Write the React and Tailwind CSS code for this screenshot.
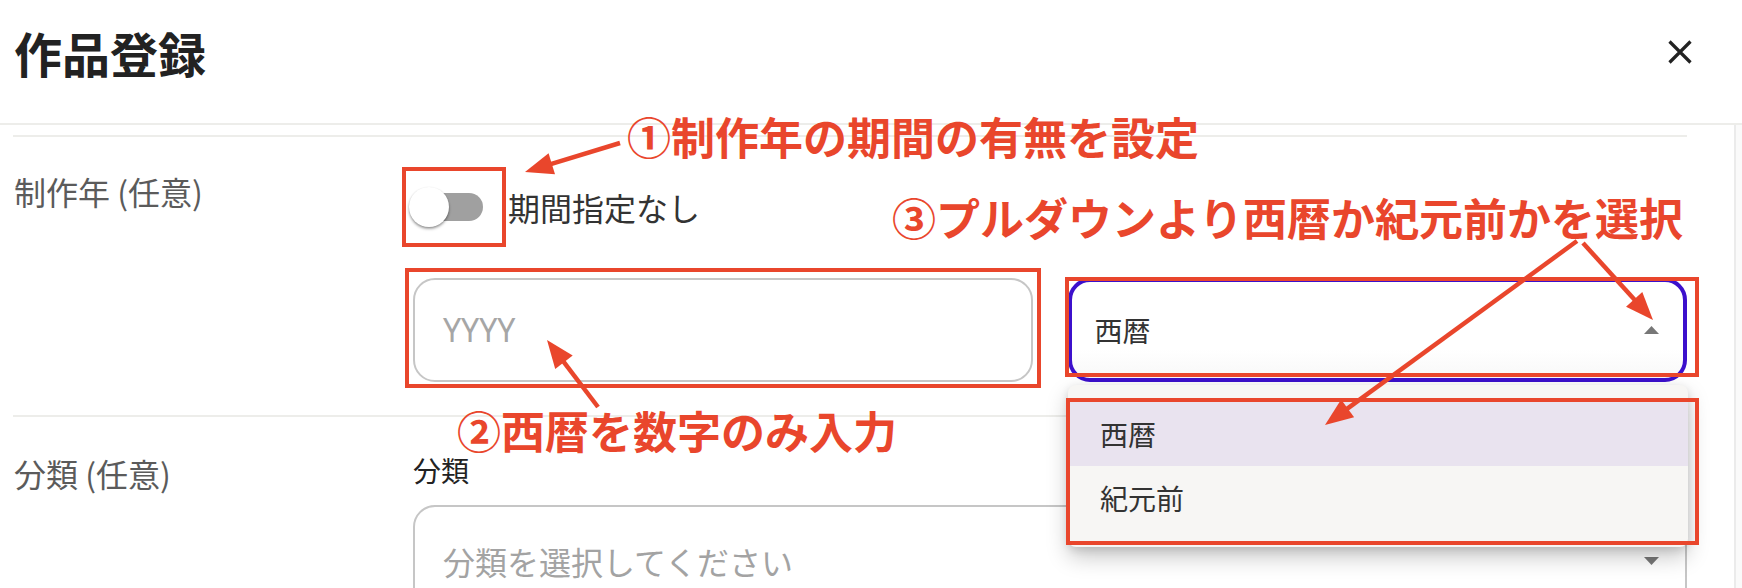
import React from "react";

function Arrow({ x1, y1, x2, y2, color = "#e9462c", head = 28, half = 11, w = 4.5 }) {
  const dx = x2 - x1;
  const dy = y2 - y1;
  const len = Math.hypot(dx, dy);
  const ux = dx / len;
  const uy = dy / len;
  const bx = x2 - ux * head;
  const by = y2 - uy * head;
  const px = -uy * half;
  const py = ux * half;
  return (
    <g>
      <line x1={x1} y1={y1} x2={bx + ux * 2} y2={by + uy * 2} stroke={color} strokeWidth={w} strokeLinecap="butt" />
      <polygon points={`${x2},${y2} ${bx + px},${by + py} ${bx - px},${by - py}`} fill={color} />
    </g>
  );
}

export default function App() {
  return (
    <div className="relative h-[588px] w-[1742px] overflow-hidden bg-white font-['Noto_Sans_CJK_JP','Noto_Sans',sans-serif]">
      {/* Header */}
      <header className="flex h-[125px] items-start justify-between border-b-2 border-[#ededea] pl-[14px] pr-[50px] pt-[28px]">
        <h1 className="text-[48px] font-bold leading-none text-[#222]">作品登録</h1>
        <svg className="mt-[12px]" width="24" height="24" viewBox="0 0 24 24">
          <path d="M1.5 1.5L22.5 22.5M22.5 1.5L1.5 22.5" stroke="#222" strokeWidth="3.2" />
        </svg>
      </header>

      {/* Body */}
      <div className="flex h-[463px]">
        <div className="flex-1 pl-[13px] pr-[47px] pt-[10px]">
          {/* Row 1 */}
          <section className="grid grid-cols-[400px_1fr] border-t-2 border-[#ededea] pb-[33px]">
            <div className="pl-[1px] pt-[38px] text-[32px] leading-none text-[#5b5b5b]">制作年 (任意)</div>
            <div className="pt-[50px]">
              <div className="-ml-[4px] flex h-[40px] items-center">
                <div className="relative h-[40px] w-[74px]">
                  <div className="absolute left-[6px] top-[6px] h-[28px] w-[68px] rounded-full bg-[#a0a0a0]" />
                  <div className="absolute left-0 top-0 h-[40px] w-[40px] rounded-full bg-white shadow-[0_2px_3px_rgba(0,0,0,0.3),0_1px_2px_rgba(0,0,0,0.2)]" />
                </div>
                <span className="ml-[25px] text-[32px] leading-none text-[#333]">期間指定なし</span>
              </div>
              <div className="mt-[51px] grid h-[104px] grid-cols-2 gap-[35px]">
                <div className="flex items-center rounded-[22px] border-2 border-[#c6c6c6] pl-[28px]">
                  <span className="text-[32px] leading-none text-[#a6a6a6] font-['Noto_Sans','Noto_Sans_CJK_JP',sans-serif]">YYYY</span>
                </div>
                <div className="flex items-center justify-between rounded-[22px] border-4 border-[#3c10cc] bg-gradient-to-b from-white from-70% to-[#f8f8f8] pl-[23px] pr-[24px]">
                  <span className="text-[28px] leading-none text-[#333]">西暦</span>
                  <svg width="15" height="8" viewBox="0 0 15 8">
                    <path d="M0 8L7.5 0L15 8Z" fill="#777" />
                  </svg>
                </div>
              </div>
            </div>
          </section>

          {/* Row 2 */}
          <section className="grid grid-cols-[400px_1fr] border-t-2 border-[#ededea]">
            <div className="pl-[1px] pt-[40px] text-[32px] leading-none text-[#5b5b5b]">分類 (任意)</div>
            <div className="pt-[39px]">
              <div className="text-[28px] leading-none text-[#222]">分類</div>
              <div className="mt-[21px] flex h-[112px] items-center justify-between rounded-[22px] border-2 border-[#c6c6c6] pl-[28px] pr-[26px]">
                <span className="text-[32px] leading-none text-[#a3a3a3]">分類を選択してください</span>
                <svg width="15" height="8" viewBox="0 0 15 8">
                  <path d="M0 0L7.5 8L15 0Z" fill="#777" />
                </svg>
              </div>
            </div>
          </section>
        </div>
        <div className="w-[8px] border-l-2 border-[#ebebeb] bg-[#fafafa]" />
      </div>

      {/* Dropdown menu */}
      <div className="absolute left-[1068px] top-[385px] w-[620px] rounded-[8px] bg-[#f7f6f4] py-[17px] shadow-[0_10px_22px_rgba(0,0,0,0.22),0_3px_8px_rgba(0,0,0,0.12)]">
        <div className="flex h-[64px] items-center bg-[#e9e3ef] pl-[32px] text-[28px] leading-none text-[#333]">西暦</div>
        <div className="flex h-[64px] items-center pl-[32px] text-[28px] leading-none text-[#333]">紀元前</div>
      </div>

      {/* Annotation boxes */}
      <div className="pointer-events-none absolute left-[402px] top-[167px] h-[80px] w-[104px] border-4 border-[#e9462c]" />
      <div className="pointer-events-none absolute left-[405px] top-[268px] h-[120px] w-[636px] border-4 border-[#e9462c]" />
      <div className="pointer-events-none absolute left-[1065px] top-[277px] h-[100px] w-[634px] border-4 border-[#e9462c]" />
      <div className="pointer-events-none absolute left-[1066px] top-[398px] h-[147px] w-[633px] border-4 border-[#e9462c]" />

      {/* Annotation arrows */}
      <svg className="pointer-events-none absolute left-0 top-0" width="1742" height="588" viewBox="0 0 1742 588">
        <Arrow x1={620} y1={143} x2={525} y2={172} />
        <Arrow x1={598} y1={407} x2={547} y2={340} />
        <Arrow x1={1577} y1={241} x2={1325} y2={425} />
        <Arrow x1={1583} y1={243} x2={1653} y2={320} />
      </svg>

      {/* Annotation texts */}
      <div className="pointer-events-none absolute left-[627px] top-[114px] whitespace-nowrap text-[44px] font-bold leading-none text-[#e9462c]">①制作年の期間の有無を設定</div>
      <div className="pointer-events-none absolute left-[892px] top-[195px] whitespace-nowrap text-[44px] font-bold leading-none text-[#e9462c]">③プルダウンより西暦か紀元前かを選択</div>
      <div className="pointer-events-none absolute left-[457px] top-[408px] whitespace-nowrap text-[44px] font-bold leading-none text-[#e9462c]">②西暦を数字のみ入力</div>
    </div>
  );
}
